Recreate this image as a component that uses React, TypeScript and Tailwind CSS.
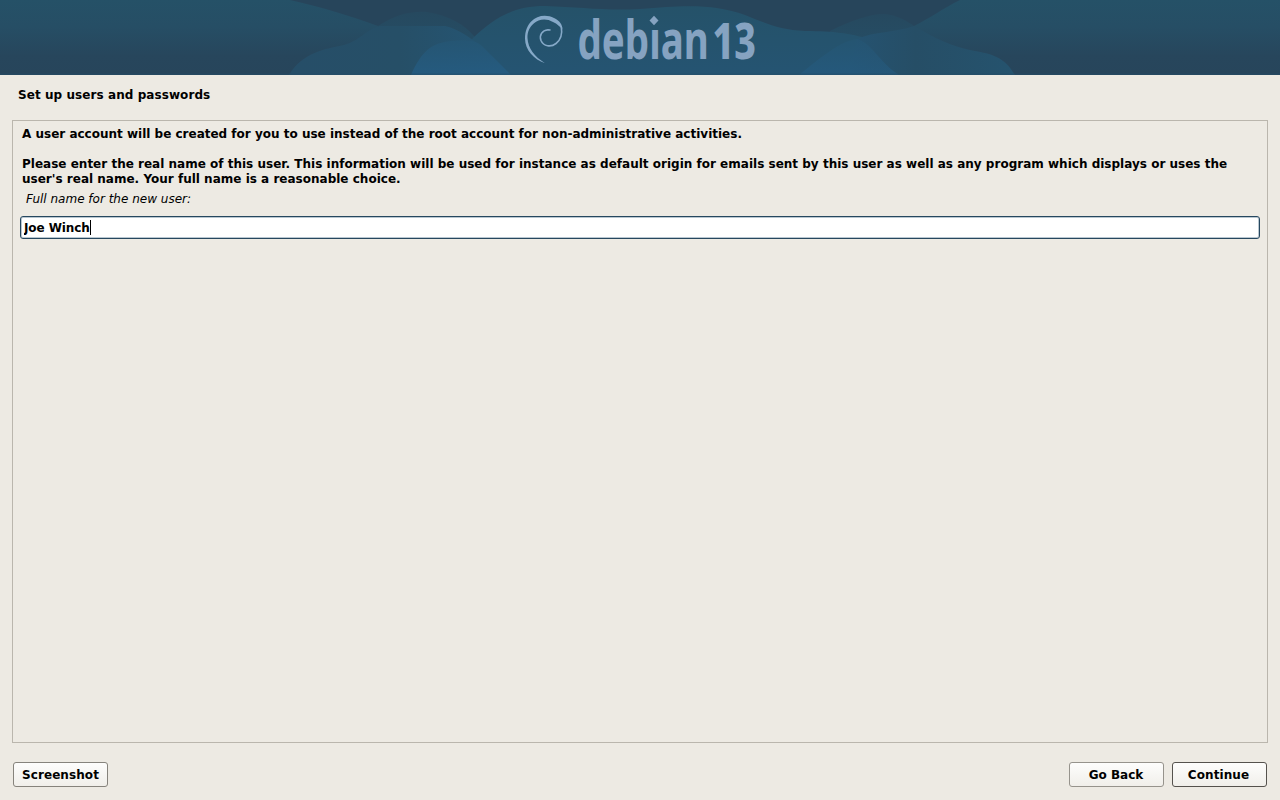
import { useState } from 'react';

function Swirl() {
    return (
        <g fill="#86a9c8">
            <path d="M545 63.2 C534 59.5 525 50 525 38.5 C525 31 527.3 25.5 531.2 21.4 C537 15 547 14.2 554 18 C559.5 20.3 562.8 25 562.3 29.5 C559.8 26.5 557.5 24 553 22 C546.5 18 538.5 19 534 23.3 C529.5 27 527.3 32 527.5 38 C528 48.5 534.5 56.5 545 63.2 Z" />
            <path fill="none" stroke="#86a9c8" strokeWidth="1.6" strokeLinecap="round" d="M561.3 27 C562.5 34 560.5 40 556 43.5 C551 47.5 543.5 46.5 541 40.5 C539 35 542 30.5 548 29.7 L550 30" />
        </g>
    );
}

function Wordmark() {
    return (
        <g fill="#86a3c1" fontFamily="'Noto Sans', sans-serif">
            {/* everything but the round dot of the i, which becomes a diamond */}
            <clipPath id="noDot">
                <path d="M570 0 H647.5 V26 H661 V0 H715 V75 H570 Z" />
            </clipPath>
            <g clipPath="url(#noDot)">
                <text transform="translate(577.5 58.7) scale(0.714 1)" fontSize="54" fontWeight="700">debian</text>
            </g>
            <path d="M654 15.8 L658.5 20.5 L654 25.2 L649.5 20.5 Z" />
            <text transform="translate(712.5 58.7) scale(0.75 1)" fontSize="50" fontWeight="800">13</text>
        </g>
    );
}

function Banner() {
    return (
        <header className="h-[75px] w-full shrink-0">
            <svg width="1280" height="75" viewBox="0 0 1280 75" className="block">
                <defs>
                    <linearGradient id="side" x1="0" y1="0" x2="0" y2="1">
                        <stop offset="0" stopColor="#255167" />
                        <stop offset="0.35" stopColor="#264e65" />
                        <stop offset="0.75" stopColor="#27465c" />
                        <stop offset="1" stopColor="#27455b" />
                    </linearGradient>
                    <linearGradient id="peak" x1="0" y1="0" x2="0" y2="1">
                        <stop offset="0" stopColor="#26495f" />
                        <stop offset="1" stopColor="#25516a" />
                    </linearGradient>
                    <linearGradient id="mid" x1="0" y1="0" x2="0" y2="1">
                        <stop offset="0" stopColor="#255269" />
                        <stop offset="1" stopColor="#255472" />
                    </linearGradient>
                    <linearGradient id="hillLeft" x1="0" y1="0" x2="1" y2="0">
                        <stop offset="0" stopColor="#264e68" />
                        <stop offset="0.5" stopColor="#264f67" />
                        <stop offset="1" stopColor="#255777" />
                    </linearGradient>
                    <linearGradient id="hillRight" x1="0" y1="0" x2="1" y2="0">
                        <stop offset="0" stopColor="#255371" />
                        <stop offset="0.4" stopColor="#264e66" />
                        <stop offset="1" stopColor="#25536e" />
                    </linearGradient>
                    <linearGradient id="glow" x1="0" y1="0" x2="0" y2="1">
                        <stop offset="0" stopColor="#255674" />
                        <stop offset="1" stopColor="#255c82" />
                    </linearGradient>
                </defs>
                <rect width="1280" height="75" fill="#27455b" />
                <path fill="url(#side)" d="M0 0 H290 C325 8 350 16 378 26 V75 H0 Z" />
                <path fill="url(#side)" d="M1280 0 H960 C942 9 930 18 914 26 V75 H1280 Z" />
                <path fill="url(#peak)" d="M378 26 C395 15 410 11 427 12 C448 15 465 25 474 36 L500 75 H378 Z" />
                <path fill="url(#peak)" d="M830 31 C852 20 870 14 884 14 C897 15 907 21 914 26 L930 75 H830 Z" />
                <path fill="url(#mid)" d="M474 37 C495 18 513 6 545 6 C580 7 605 11 640 9 C685 5 715 4 745 15 C765 23 780 30 805 31 C835 31 850 34 862 37 L900 75 H440 Z" />
                <path fill="url(#hillLeft)" d="M289 75 C303 52 325 49 344 45 C361 40 365 30 380 26 H445 C467 31 486 50 511 75 Z" />
                <path fill="url(#hillRight)" d="M857 39 C875 31 894 33 914 26 C935 38 952 47 975 51 C1000 55 1007 62 1015 75 H850 Z" />
                <path fill="url(#glow)" opacity="0.85" d="M411 75 C421 53 430 43 451 41 C467 39 477 41 482 46 L511 75 Z" />
                <path fill="url(#glow)" opacity="0.6" d="M799 75 C820 58 840 41 857 39 C873 44 878 61 899 75 Z" />
                <rect y="73.5" width="1280" height="1.5" fill="#264d68" opacity="0.5" />
                <Swirl />
                <Wordmark />
            </svg>
        </header>
    );
}

const buttonBase =
    'h-[25px] w-[95px] rounded-[3px] border bg-linear-to-b from-[#fdfdfc] to-[#f1efea] pt-px text-center leading-[22px]';

export default function App() {
    const [fullName, setFullName] = useState('Joe Winch');

    return (
        <div className="flex h-[800px] w-[1280px] flex-col overflow-hidden bg-[#edeae3] font-['DejaVu_Sans',sans-serif] text-[12px] leading-[15px] font-bold text-black">
            <Banner />
            <h1 className="mt-[13px] ml-[18px] text-[12px] leading-[15px] tracking-[0.07px]">Set up users and passwords</h1>

            <main className="mx-3 mt-[17px] flex h-[623px] flex-col border border-[#bab6ad] px-[7px] pt-1.5">
                <div className="px-0.5">
                    <p>A user account will be created for you to use instead of the root account for non-administrative activities.</p>
                    <p className="mt-[15px] tracking-[0.01px]">
                        Please enter the real name of this user. This information will be used for instance as default origin for emails sent by this user as well as any program which displays or uses the
                        <br />
                        user's real name. Your full name is a reasonable choice.
                    </p>
                </div>
                <label htmlFor="full-name" className="mt-[5px] ml-1.5 font-normal italic">
                    Full name for the new user:
                </label>
                <div className="mt-[9px] flex h-[23px] items-center rounded-[3px] border border-[#26475f] bg-white px-[3px] shadow-[inset_0_0_0_1px_#b9c7d0]">
                    <input
                        id="full-name"
                        value={fullName}
                        onChange={(e) => setFullName(e.target.value)}
                        className="field-sizing-content bg-transparent pt-0.5 tracking-[-0.1px] outline-none"
                    />
                    <span className="h-[15px] w-px bg-black" />
                </div>
            </main>

            <footer className="mt-[19px] flex gap-2 px-[13px]">
                <button className={`${buttonBase} mr-auto border-[#86837c] tracking-[0.08px]`}>Screenshot</button>
                <button className={`${buttonBase} border-[#96938c] pr-px`}>Go Back</button>
                <button className={`${buttonBase} border-[#55524d] pr-0.5 tracking-[0.08px]`}>Continue</button>
            </footer>
        </div>
    );
}
